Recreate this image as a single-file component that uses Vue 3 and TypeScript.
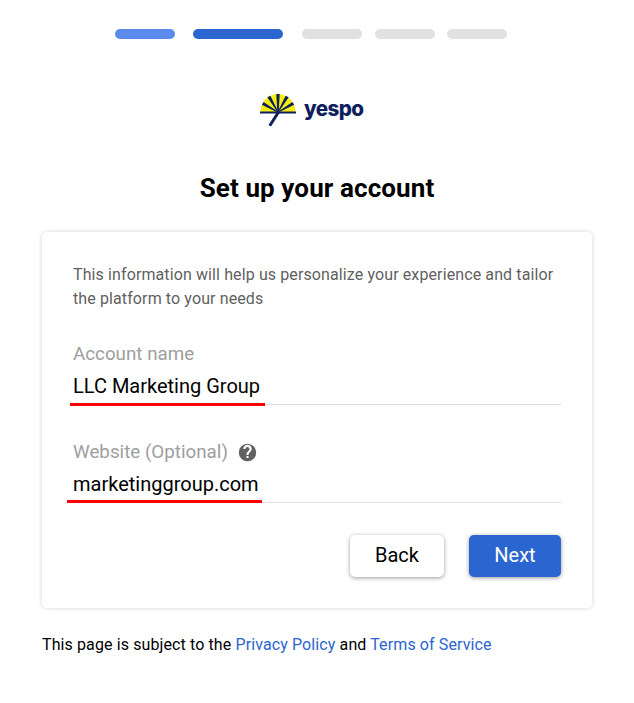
<script setup lang="ts">
const steps = [
  { w: 60, c: '#5b8bec', m: 18 },
  { w: 90, c: '#2b65cf', m: 19 },
  { w: 60, c: '#e1e1e1', m: 13 },
  { w: 60, c: '#e1e1e1', m: 12 },
  { w: 60, c: '#e1e1e1', m: 0 },
]
</script>

<template>
  <div class="page">
    <div class="steps">
      <span
        v-for="(s, i) in steps"
        :key="i"
        class="step"
        :style="{ width: s.w + 'px', background: s.c, marginRight: s.m + 'px' }"
      ></span>
    </div>
    <div class="logo">
      <svg width="36" height="34" viewBox="0 0 36 34" class="mark">
        <path d="M0.500 19 A 17.500 18 0 0 1 35.500 19 Z" fill="#f4ee0f" />
        <g fill="#0e1f5c">
          <path d="M0 18.500 H36 V20.500 H0 Z" />
          <path d="M16.300 1 H19.700 L18.700 19 H17.300 Z" />
          <path d="M7.300 4.200 L10.400 2.700 L18.400 19 H17.400 Z" />
          <path d="M28.700 4.200 L25.600 2.700 L17.600 19 H18.600 Z" />
          <path d="M1.800 11.800 L3.600 8.900 L18.400 19 L17.600 19.500 Z" />
          <path d="M34.200 11.800 L32.400 8.900 L17.600 19 L18.400 19.500 Z" />
          <path d="M16.500 19.500 H20 L11 33.500 L8.500 32 Z" />
        </g>
      </svg>
      <span class="word">yespo</span>
    </div>
    <h1 class="title">Set up your account</h1>
    <div class="card">
      <p class="intro">This information will help us personalize your experience and tailor the platform to your needs</p>
      <div class="field first">
        <div class="label">Account name</div>
        <div class="value">LLC Marketing Group</div>
        <span class="mark-red one"></span>
      </div>
      <div class="field second">
        <div class="label">
          Website (Optional)
          <svg class="help" width="19" height="19" viewBox="0 0 24 24">
            <path fill="#616161" d="M12 1a11 11 0 1 0 0 22 11 11 0 0 0 0-22zm1.300 18h-2.600v-2.600h2.600V19zm2.600-8.300-1.100 1.200c-.9.900-1.500 1.600-1.500 3.300h-2.600v-.6c0-1.400.6-2.700 1.500-3.600l1.600-1.600c.5-.5.700-1.100.7-1.800a2.600 2.600 0 0 0-5.200 0H6.700a5.300 5.300 0 0 1 10.600 0c0 1.200-.5 2.200-1.400 3.100z" />
          </svg>
        </div>
        <div class="value">marketinggroup.com</div>
        <span class="mark-red two"></span>
      </div>
      <div class="actions">
        <button class="btn back">Back</button>
        <button class="btn next">Next</button>
      </div>
    </div>
    <p class="foot">
      This page is subject to the <a>Privacy Policy</a> and <a>Terms of Service</a>
    </p>
  </div>
</template>

<style scoped>
.page {
  width: 634px;
  height: 703px;
  box-sizing: border-box;
  padding-top: 29px;
  font-family: Roboto, sans-serif;
  background: #fff;
  overflow: hidden;
}
.steps {
  display: flex;
  padding-left: 115px;
}
.step {
  height: 10px;
  border-radius: 5px;
}
.logo {
  display: flex;
  align-items: flex-start;
  margin: 54px 0 0 260px;
  height: 34px;
}
.mark {
  display: block;
}
.word {
  margin: 1px 0 0 8px;
  font-family: Inter, sans-serif;
  font-weight: 800;
  font-size: 20.6px;
  line-height: 30px;
  letter-spacing: -0.6px;
  color: #0e1f5c;
}
.title {
  margin: 45px 0 0;
  font-size: 26px;
  line-height: 32px;
  font-weight: 700;
  letter-spacing: 0.1px;
  text-align: center;
  color: #000;
}
.card {
  width: 550px;
  height: 376px;
  box-sizing: border-box;
  margin: 28px 0 0 42px;
  padding: 31px 31px 0;
  border-radius: 5px;
  background: #fff;
  box-shadow: 0 0 5px rgba(0, 0, 0, 0.18);
}
.intro {
  margin: 0;
  font-size: 16px;
  line-height: 24px;
  letter-spacing: 0.11px;
  color: #5f5f5f;
}
.field {
  position: relative;
  height: 62px;
  border-bottom: 1px solid #dedede;
}
.first {
  margin-top: 31px;
}
.second {
  margin-top: 35px;
}
.label {
  display: flex;
  align-items: center;
  font-size: 18.8px;
  line-height: 24px;
  color: #9e9e9e;
}
.help {
  margin-left: 10px;
}
.value {
  margin-top: 8px;
  font-size: 20px;
  line-height: 24px;
  color: #000;
}
.mark-red {
  position: absolute;
  height: 3px;
  background: #ff0000;
}
.one {
  left: -3px;
  width: 195px;
  bottom: -2px;
}
.two {
  left: -6px;
  width: 195px;
  bottom: -1px;
}
.actions {
  display: flex;
  justify-content: flex-end;
  margin-top: 32px;
  gap: 25px;
}
.btn {
  height: 42px;
  border: 0;
  border-radius: 5px;
  padding: 0 0 2px;
  font-family: Roboto, sans-serif;
  font-size: 20px;
  box-shadow: 0 1px 4px rgba(0, 0, 0, 0.4);
}
.back {
  width: 94px;
  background: #fff;
  color: #000;
}
.next {
  width: 92px;
  background: #2b65cf;
  color: #fff;
}
.foot {
  margin: 26px 0 0 42px;
  font-size: 16px;
  line-height: 22px;
  letter-spacing: 0.11px;
  color: #000;
}
.foot a {
  color: #2b65cf;
}
</style>
